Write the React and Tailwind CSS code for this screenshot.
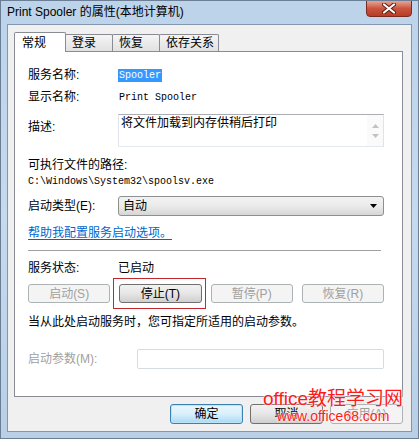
import React from 'react';

const SANS = "font-['Liberation_Sans','Noto_Sans_CJK_SC',sans-serif]";
const MONO = "font-['Liberation_Mono','Noto_Sans_CJK_SC',monospace]";

const Tab = ({ label, active, w }) =>
  active ? (
    <div
      className={`relative z-10 -ml-px mb-[-1px] h-[20px] bg-white border border-[#898c95] border-b-0 rounded-t-[2px] pl-[7px] pt-[2px] leading-[16px] ${w}`}
    >
      {label}
    </div>
  ) : (
    <div
      className={`-ml-px h-[17px] bg-gradient-to-b from-[#f5f5f5] to-[#e1e1e1] border border-[#898c95] border-b-0 rounded-t-[2px] pl-[6px] leading-[16px] ${w}`}
    >
      {label}
    </div>
  );

const Btn = ({ children, disabled, className = '' }) => (
  <div
    className={`h-[19px] flex items-center justify-center rounded-[3px] border leading-none ${
      disabled
        ? 'border-[#adb2b5] bg-[#f4f4f4] text-[#a0a0a0]'
        : 'border-[#707070] bg-gradient-to-b from-[#f2f2f2] via-[#e6e6e6] to-[#cfcfcf] text-black'
    } ${className}`}
  >
    {children}
  </div>
);

export default function App() {
  return (
    <div
      className={`relative w-[419px] h-[439px] overflow-hidden flex flex-col bg-gradient-to-b from-[#bcd3ea] via-[#c6daee] to-[#b8cfe6] border border-[#6a7e96] text-[12px] text-black ${SANS}`}
    >
      {/* title bar */}
      <div className="h-[23px] flex items-start justify-between">
        <span className="pl-[6px] pt-[4px] leading-[14px] text-[12px] text-black">
          Print Spooler 的属性(本地计算机)
        </span>
        <div className="mr-[6px] -mt-px w-[46px] h-[17px] rounded-b-[4px] border border-[#7a2b20] bg-gradient-to-b from-[#e7a496] via-[#c9553f] to-[#b93b24] flex items-center justify-center">
          <svg width="14" height="11" viewBox="0 0 14 11">
            <path d="M2 1.5 L12 9.5 M12 1.5 L2 9.5" stroke="#5a1a10" strokeWidth="4" strokeLinecap="round" />
            <path d="M2 1.5 L12 9.5 M12 1.5 L2 9.5" stroke="#ffffff" strokeWidth="2.2" strokeLinecap="round" />
          </svg>
        </div>
      </div>

      {/* body */}
      <div className="mx-[6px] h-[408px] bg-[#f0f0f0] border border-[#8396ad] flex flex-col pl-[6px] pr-[8px] pt-[7px]">
        {/* tabs */}
        <div className="h-[19px] flex items-end pl-px">
          <Tab label="常规" active w="w-[52px]" />
          <Tab label="登录" w="w-[48px]" />
          <Tab label="恢复" w="w-[48px]" />
          <Tab label="依存关系" w="w-[60px]" />
        </div>

        {/* tab panel */}
        <div className="h-[346px] bg-white border border-[#898c95] pl-[13px] pr-[18px] pt-[14px] flex flex-col">
          <div className="h-[18px] flex items-center">
            <span className="w-[90px]">服务名称:</span>
            <span className={`${MONO} text-[10px] h-[13px] leading-[13px] px-px bg-[#3399ff] text-white`}>
              Spooler
            </span>
          </div>
          <div className="mt-[4px] h-[18px] flex items-center">
            <span className="w-[90px]">显示名称:</span>
            <span className={`${MONO} text-[10px] pl-px`}>Print Spooler</span>
          </div>
          <div className="mt-[8px] h-[33px] flex">
            <span className="w-[90px] pt-[5px] leading-[16px]">描述:</span>
            <div className="flex-1 flex border-t border-t-[#abadb3] border-x border-x-[#e2e3ea] border-b border-b-[#e3e9ef]">
              <div className="flex-1 pl-[2px] pt-[1px] leading-[14px]">将文件加载到内存供稍后打印</div>
              <div className="w-[16px] flex flex-col items-center justify-center gap-[6px] bg-[#fafafa]">
                <svg width="7" height="4" viewBox="0 0 7 4">
                  <path d="M0 4 L3.5 0 L7 4 Z" fill="#c2c2c2" />
                </svg>
                <svg width="7" height="4" viewBox="0 0 7 4">
                  <path d="M0 0 L3.5 4 L7 0 Z" fill="#c2c2c2" />
                </svg>
              </div>
            </div>
          </div>
          <div className="mt-[10px] h-[16px] flex items-center">可执行文件的路径:</div>
          <div className={`h-[16px] flex items-center ${MONO} text-[10px]`}>
            C:\Windows\System32\spoolsv.exe
          </div>
          <div className="mt-[7px] h-[20px] flex items-center">
            <span className="w-[90px]">启动类型(E):</span>
            <div className="flex-1 h-[20px] rounded-[3px] border border-[#8e8f8f] bg-gradient-to-b from-[#f2f2f2] via-[#ebebeb] to-[#d6d6d6] flex items-center justify-between pl-[4px] pr-[6px]">
              <span>自动</span>
              <svg width="7" height="4" viewBox="0 0 7 4">
                <path d="M0 0 L7 0 L3.5 4 Z" fill="#000" />
              </svg>
            </div>
          </div>
          <div className="mt-[9px] h-[16px] flex items-center">
            <span className="text-[#0066cc] underline underline-offset-2">帮助我配置服务启动选项。</span>
          </div>
          <div className="mt-[9px] h-px w-[353px] bg-[#a0a0a0]" />
          <div className="mt-[9px] h-[16px] flex items-center">
            <span className="w-[90px]">服务状态:</span>
            <span>已启动</span>
          </div>
          <div className="mt-[8px] grid grid-cols-4 gap-[9px]">
            <Btn disabled>启动(S)</Btn>
            <div className="relative">
              <div className="absolute -left-[6px] -right-[4px] -top-[6px] -bottom-[6px] border border-[#c0282d]" />
              <Btn>停止(T)</Btn>
            </div>
            <Btn disabled>暂停(P)</Btn>
            <Btn disabled>恢复(R)</Btn>
          </div>
          <div className="mt-[11px] h-[16px] flex items-center">
            当从此处启动服务时，您可指定所适用的启动参数。
          </div>
          <div className="mt-[19px] h-[20px] flex items-center">
            <span className="w-[109px] text-[#a0a0a0]">启动参数(M):</span>
            <div className="flex-1 h-[20px] rounded-[2px] border border-[#d5dbe2] bg-white" />
          </div>
        </div>

        {/* dialog buttons */}
        <div className="mt-[7px] flex justify-end gap-[7px]">
          <div className="w-[73px] h-[20px] rounded-[3px] border border-[#3c7fb1] bg-gradient-to-b from-[#eaf6fd] via-[#d9f0fc] to-[#a7d9f5] shadow-[inset_0_0_0_1px_#bde3f8] flex items-center justify-center leading-none">
            确定
          </div>
          <div className="w-[73px] h-[20px] rounded-[3px] border border-[#707070] bg-gradient-to-b from-[#f2f2f2] via-[#e6e6e6] to-[#cfcfcf] flex items-center justify-center leading-none">
            取消
          </div>
          <div className="w-[73px] h-[20px] rounded-[3px] border border-[#adb2b5] bg-[#f4f4f4] text-[#a0a0a0] flex items-center justify-center leading-none">
            应用(A)
          </div>
        </div>
      </div>

      {/* watermark */}
      <div className="absolute left-[262px] top-[387px] flex flex-col items-center text-[#ff1a1a] [text-shadow:0_0_2px_#fff,0_0_2px_#fff]">
        <span className="text-[19px] leading-[22px]">office教程学习网</span>
        <span className="text-[14px] leading-[15px] -mt-px">www.office68.com</span>
      </div>
    </div>
  );
}
